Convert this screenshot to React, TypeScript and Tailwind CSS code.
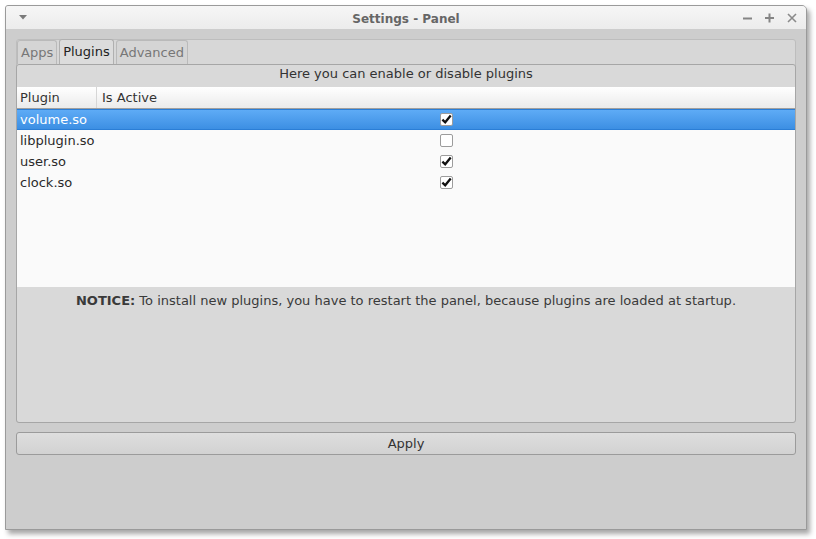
import { useState } from "react";

type Plugin = {
  name: string;
  active: boolean;
};

const initialPlugins: Plugin[] = [
  { name: "volume.so", active: true },
  { name: "libplugin.so", active: false },
  { name: "user.so", active: true },
  { name: "clock.so", active: true },
];

function CheckBox({ checked, onChange }: { checked: boolean; onChange: () => void }) {
  return (
    <button
      type="button"
      onClick={onChange}
      className="flex h-[13px] w-[13px] items-center justify-center rounded-[2px] border border-[#9c9c9c] bg-white"
    >
      {checked && (
        <svg width="12" height="11" viewBox="0 0 12 11">
          <path d="M1.5 5.6 L4.6 8.6 L10.6 1.2" fill="none" stroke="#111" strokeWidth="2.5" />
        </svg>
      )}
    </button>
  );
}

export default function App() {
  const [plugins, setPlugins] = useState<Plugin[]>(initialPlugins);
  const [selected, setSelected] = useState(0);
  const [tab, setTab] = useState("Plugins");

  const toggle = (i: number) => {
    setPlugins((prev) => prev.map((p, j) => (j === i ? { ...p, active: !p.active } : p)));
  };

  return (
    <div className="h-[539px] w-[816px] bg-white pl-[5px] pt-[5px] font-['DejaVu_Sans',sans-serif] text-[13px] text-[#333]">
      <div className="flex h-[525px] w-[802px] flex-col overflow-hidden rounded-tr-[5px] rounded-tl-[3px] border border-[#9a9a9a] bg-[#cdcdcd] shadow-[3px_4px_5px_rgba(0,0,0,0.35)]">
        {/* Title bar */}
        <div className="relative flex h-[23px] shrink-0 items-center bg-gradient-to-b from-[#f6f6f6] to-[#ececec]">
          <svg className="ml-[13px]" width="8" height="5" viewBox="0 0 8 5">
            <path d="M0 0 H8 L4 4.5 Z" fill="#7a7a7a" />
          </svg>
          <div className="absolute inset-x-0 top-[4px] text-center text-[12px] font-bold text-[#666]">Settings - Panel</div>
          <div className="ml-auto mr-[9px] flex items-center gap-[12px]">
            <svg width="10" height="10" viewBox="0 0 10 10">
              <path d="M0 5.5 H9" stroke="#858585" strokeWidth="2" />
            </svg>
            <svg width="10" height="10" viewBox="0 0 10 10">
              <path d="M0 5 H9 M4.5 0.5 V9.5" stroke="#858585" strokeWidth="2" />
            </svg>
            <svg width="10" height="10" viewBox="0 0 10 10">
              <path d="M1 1 L9 9 M9 1 L1 9" stroke="#8a8a8a" strokeWidth="1.6" />
            </svg>
          </div>
        </div>

        {/* Body */}
        <div className="flex flex-1 flex-col px-[10px] pt-[10px]">
          {/* Tab pane */}
          <div className="flex h-[384px] flex-col rounded-[3px] border border-[#bdbdbd] bg-[#d7d7d7]">
            <div className="flex h-[24px] items-end gap-[2px]">
              {["Apps", "Plugins", "Advanced"].map((t) => (
                <button
                  key={t}
                  type="button"
                  onClick={() => setTab(t)}
                  className={
                    t === tab
                      ? "h-[25px] rounded-t-[3px] border border-b-0 border-[#b0b0b0] bg-[#dcdcdc] px-[3px] text-[13px] text-[#222]"
                      : "h-[24px] rounded-t-[3px] border border-b-0 border-[#bababa] bg-[#d5d5d5] px-[3px] text-[13px] text-[#777]"
                  }
                >
                  {t}
                </button>
              ))}
            </div>
            <div className="-mx-px -mb-px flex flex-1 flex-col rounded-[3px] border border-[#a6a6a6] bg-[#d9d9d9]">
              <div className="flex h-[22px] items-center justify-center pb-[4px] text-[#333]">
                Here you can enable or disable plugins
              </div>
              {/* Table */}
              <div className="flex h-[200px] flex-col bg-[#fafafa]">
                <div className="flex h-[22px] items-center border-b border-[#9f9f9f] bg-gradient-to-b from-[#ffffff] to-[#ebebeb]">
                  <div className="flex h-full w-[80px] items-center border-r border-[#d6d6d6] pl-[3px]">Plugin</div>
                  <div className="pl-[5px]">Is Active</div>
                </div>
                {plugins.map((p, i) => (
                  <div
                    key={p.name}
                    onClick={() => setSelected(i)}
                    className={
                      i === selected
                        ? "flex h-[21px] items-center border-y border-[#2b7ed6] bg-gradient-to-b from-[#5eabf6] to-[#3c8fe3] text-white"
                        : "flex h-[21px] items-center text-[#2a2a2a]"
                    }
                  >
                    <div className="w-[80px] pl-[3px]">{p.name}</div>
                    <div className="flex flex-1 justify-center">
                      <CheckBox checked={p.active} onChange={() => toggle(i)} />
                    </div>
                  </div>
                ))}
              </div>
              <div className="pt-[4px] text-center text-[#3a3a3a]">
                <span className="font-bold">NOTICE:</span> To install new plugins, you have to restart the panel, because plugins are loaded at startup.
              </div>
            </div>
          </div>

          <button
            type="button"
            className="mt-[9px] h-[23px] rounded-[3px] border border-[#9b9b9b] bg-gradient-to-b from-[#dedede] to-[#d2d2d2] text-[13px] text-[#333]"
          >
            Apply
          </button>
        </div>
      </div>
    </div>
  );
}
